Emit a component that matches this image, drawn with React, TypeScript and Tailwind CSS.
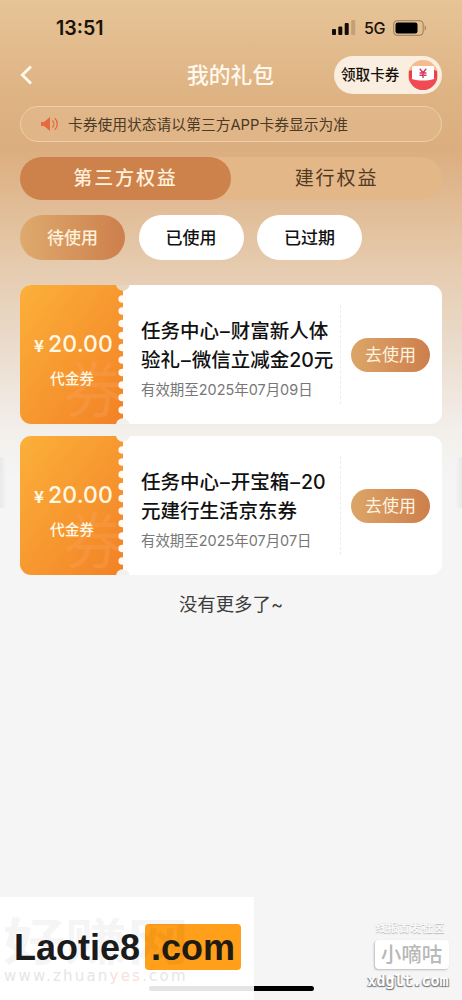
import React from 'react';

interface Coupon {
  id: number;
  amount: string;
  lines: string[];
  expire: string;
  notch: string;
}

const coupons: Coupon[] = [
  {
    id: 1,
    amount: '20.00',
    lines: ['任务中心–财富新人体', '验礼–微信立减金20元'],
    expire: '有效期至2025年07月09日',
    notch: '#e8d5c0',
  },
  {
    id: 2,
    amount: '20.00',
    lines: ['任务中心–开宝箱–20', '元建行生活京东券'],
    expire: '有效期至2025年07月07日',
    notch: '#f3f0ed',
  },
];

const StatusBar: React.FC = () => (
  <div className="flex h-14 items-center justify-between pl-[56px] pr-[35px]">
    <span className="pt-0.5 text-[19.6px] font-semibold leading-none text-[#1a1209]">13:51</span>
    <div className="flex items-center pb-px">
      <svg width="24" height="15" viewBox="0 0 24 15">
        <rect x="0" y="9" width="4" height="6" rx="1" fill="#130d06" />
        <rect x="6.3" y="6.5" width="4" height="8.5" rx="1" fill="#130d06" />
        <rect x="12.7" y="3" width="4" height="12" rx="1" fill="#130d06" />
        <rect x="19.2" y="0" width="4" height="15" rx="1" fill="#c3a078" />
      </svg>
      <span className="ml-2 w-[29px] pt-px text-[16px] font-medium leading-none tracking-[-0.3px] text-[#1a1209]">5G</span>
      <svg width="34" height="16" viewBox="0 0 34 16">
        <rect x="0.6" y="0.6" width="29.6" height="14.8" rx="4" fill="none" stroke="#a48a67" strokeWidth="1.2" />
        <rect x="2.5" y="2.5" width="22" height="11" rx="2.3" fill="#000" />
        <path d="M31.6 5.3c2 .8 2 4.6 0 5.4z" fill="#a48a67" />
      </svg>
    </div>
  </div>
);

const CouponBadge: React.FC = () => (
  <svg width="32" height="32" viewBox="0 0 32 32">
    <circle cx="16" cy="16" r="15" fill="#f5bd8e" />
    <path d="M2 12l3-1h22l3 1v8c-2 6-8 11-14 11S4 26 2 20z" fill="#e2434e" />
    <rect x="5" y="7" width="22" height="15" rx="1" fill="#fff" />
    <path d="M2 17l3 3c7 2 15 2 22 0l3-3c0 8-6 14-14 14S2 25 2 17z" fill="#f04a55" />
    <path d="M12.8 9.8l3.2 4 3.2-4M12.5 14h7M12.5 16.3h7M16 13.7v5.3" fill="none" stroke="#d83a60" strokeWidth="1.4" />
  </svg>
);

const CouponTitle: React.FC<{ text: string }> = ({ text }) => (
  <p className="whitespace-nowrap text-[19.5px] font-medium leading-[29px] text-[#111]">
    {text.split('–').map((part, i) => (
      <React.Fragment key={i}>
        {i > 0 && <span className="px-px">–</span>}
        {part}
      </React.Fragment>
    ))}
  </p>
);

const CouponCard: React.FC<{ coupon: Coupon }> = ({ coupon }) => (
  <div className="relative flex h-[139px] overflow-hidden rounded-[11px] bg-white">
    {/* 左侧金额 */}
    <div className="relative w-[104px] bg-linear-to-br from-[#fbb03a] to-[#f28125] text-[#fff8e5]">
      <span className="absolute left-[43px] top-[70px] text-[61px] leading-[72px] text-[#f9a663]/30">券</span>
      <div className="relative flex flex-col items-center pt-[45px]">
        <div className="flex items-baseline gap-1 pl-[3px] leading-[28px]">
          <span className="font-['Noto_Sans_CJK_SC'] text-[17px] font-bold">¥</span>
          <span className="text-[23px] font-medium tracking-[0.1px]">{coupon.amount}</span>
        </div>
        <span className="mt-[9px] text-[14.7px] font-medium leading-[22px]">代金券</span>
      </div>
    </div>

    {/* 锯齿边 */}
    <svg className="absolute left-[96px] top-0" width="18" height="139" viewBox="0 0 18 139">
      {[14, 26, 38.5, 50.5, 62.5, 75, 87.5, 100, 112.5, 125].map((y) => (
        <circle key={y} cx="6.2" cy={y} r="3.8" fill="#fffaf3" />
      ))}
      <path d="M7 5h2v129H7z" fill="#fff" />
      <circle cx="6.8" cy="-1" r="6.8" fill={coupon.notch} />
      <circle cx="6.8" cy="140" r="6.8" fill="#f3f0ed" />
    </svg>

    <div className="w-[216px] shrink-0 pl-[17px] pt-8">
      {coupon.lines.map((line) => (
        <CouponTitle key={line} text={line} />
      ))}
      <p className="mt-[4px] whitespace-nowrap text-[14.45px] leading-[22px] text-[#777]">{coupon.expire}</p>
    </div>

    <div className="my-5 flex flex-1 items-center border-l border-dashed border-[#ececec] pl-[10px]">
      <button className="h-[34px] w-[79px] rounded-full bg-linear-to-r from-[#dca568] to-[#cd7f4c] pt-[3px] text-[17px] text-[#fff3e2]">
        去使用
      </button>
    </div>
  </div>
);

const App: React.FC = () => {
  return (
    <div className="relative h-[1000px] w-[462px] overflow-hidden bg-[#f5f5f5] font-[Inter,'Noto_Sans_CJK_SC',sans-serif]">
      <div className="h-full bg-[linear-gradient(180deg,#e6c496_0px,#deb283_100px,#dcae7f_150px,#e6ccb0_270px,#eadaca_340px,#f3efeb_430px,#f5f5f5_480px)]">
        <StatusBar />

        {/* 标题 */}
        <header className="grid h-[38px] grid-cols-[1fr_auto_1fr] items-center pl-5 pr-5">
          <svg width="13" height="20" viewBox="0 0 13 20" fill="none">
            <path d="M11 1.5L2.3 10l8.7 8.5" stroke="#fff9ed" strokeWidth="2.8" />
          </svg>
          <h1 className="pr-px text-[21.8px] font-medium text-[#fff9ed]">我的礼包</h1>
          <button className="flex h-[38px] w-[108px] items-center justify-between justify-self-end rounded-full bg-[#faeee0] pl-[7px] pr-[3px] text-[14.6px] font-medium text-[#17110b]">
            <span className="pt-0.5">领取卡券</span>
            <CouponBadge />
          </button>
        </header>

        <main className="px-5 pt-3">
          {/* 公告 */}
          <div className="flex h-9 items-center rounded-full border-[1.5px] border-[#ecd0aa] bg-[#e2ba8d]/60 pl-[20px]">
            <svg width="18" height="14" viewBox="0 0 18 14" fill="none">
              <path d="M0 5h3l6-5v14L3 9H0z" fill="#e6693f" />
              <path d="M11.3 3.5c2 2 2 5 0 7M13.8 1.3c3.3 3.2 3.3 8.2 0 11.4" stroke="#e6693f" strokeWidth="1.3" />
            </svg>
            <span className="ml-[9px] pt-0.5 text-[14.78px] text-[#4c3926]">卡券使用状态请以第三方APP卡券显示为准</span>
          </div>

          {/* 一级标签 */}
          <div className="mt-[15px] flex h-[43px] rounded-full bg-[#e4b788]">
            <button className="flex-1 rounded-full bg-[#cd814b] pt-0.5 text-[19px] font-medium tracking-[1.9px] text-[#fff0da]">第三方权益</button>
            <button className="flex-1 pt-0.5 text-[19px] tracking-[1.9px] text-[#513a25]">建行权益</button>
          </div>

          {/* 二级标签 */}
          <div className="mt-[15px] flex gap-[13.5px] text-[17px] font-medium">
            <button className="h-[45px] w-[105px] rounded-full bg-linear-to-r from-[#deaa6e] to-[#cd7f4c] pt-0.5 text-[#fff0da]">待使用</button>
            <button className="h-[45px] w-[105px] rounded-full bg-white pt-0.5 text-[#111]">已使用</button>
            <button className="h-[45px] w-[105px] rounded-full bg-white pt-0.5 text-[#111]">已过期</button>
          </div>

          <div className="mt-[25px] flex flex-col gap-3">
            {coupons.map((coupon) => (
              <CouponCard key={coupon.id} coupon={coupon} />
            ))}
          </div>

          <p className="mt-[15px] text-center text-[18.4px] leading-7 text-[#3d3d3d]">没有更多了~</p>
        </main>
      </div>

      {/* 两侧阴影 */}
      <div className="absolute left-0 top-[457px] h-[51px] w-[7px] bg-linear-to-r from-[#e9e9e9] to-[#f5f5f5]" />
      <div className="absolute right-0 top-[457px] h-[51px] w-[7px] bg-linear-to-l from-[#e9e9e9] to-[#f5f5f5]" />

      <div className="absolute left-[149px] top-[986px] h-[5px] w-[165px] rounded-full bg-black" />

      {/* 左下角水印 */}
      <div className="absolute bottom-0 left-0 h-[103px] w-[254px] bg-white">
        <div className="absolute left-[149px] top-[89px] h-[5px] w-[105px] rounded-l-full bg-[#e4e4e4]" />
        <div className="absolute left-[145px] top-[27px] h-[46px] w-[96px] rounded bg-[#ff9f1a]" />
        <span className="absolute left-[3px] top-[17px] origin-top-left scale-y-80 whitespace-nowrap text-[62px] font-bold leading-[70px] text-black/4">好赚网</span>
        <span className="absolute left-[4px] top-[69px] whitespace-nowrap font-['DejaVu_Sans'] text-[15px] leading-5 tracking-[2.2px] text-[#e6e6e6]">
          www.zhuan<span className="text-[#fadfda]">yes</span>.com
        </span>
        <span className="absolute left-[14px] top-[30px] font-['Liberation_Sans'] text-[36px] font-bold leading-[42px] text-[#1b1b1b]">Laotie8</span>
        <span className="absolute left-[151px] top-[30px] font-['Liberation_Sans'] text-[36px] font-bold leading-[42px] text-[#1f1a12]">.com</span>
      </div>

      {/* 右下角水印 */}
      <div className="absolute left-[366px] top-[921px] flex w-[84px] flex-col items-center">
        <span className="whitespace-nowrap pl-1 text-[11.5px] font-bold leading-[15px] text-[#f8f8f8] [text-shadow:0_1px_1px_#bbb]">线报首发社区</span>
        <span className="ml-[7px] mt-1 h-[29px] w-[74px] rounded bg-white text-center text-[20.5px] font-medium leading-[29px] text-[#b8b8b8] shadow-[-1px_1px_2px_#bbb]">小嘀咕</span>
        <span className="mt-[4px] font-['DejaVu_Sans_Mono'] text-[15px] font-bold leading-[16px] text-white [text-shadow:1px_1px_1px_#777,-1px_1px_1px_#888]">xdglt.com</span>
      </div>
    </div>
  );
};

export default App;
